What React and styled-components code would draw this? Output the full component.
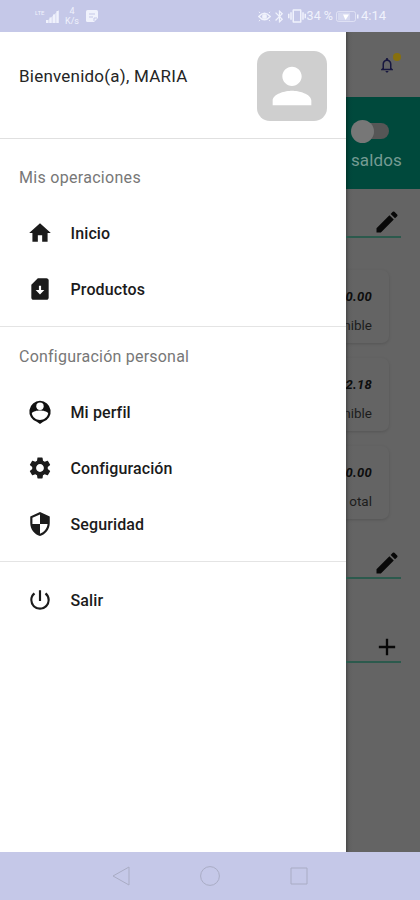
import styled, { createGlobalStyle } from "styled-components";
import {
  MdAdd,
  MdBluetooth,
  MdEdit,
  MdHome,
  MdNotificationsNone,
  MdPerson,
  MdPowerSettingsNew,
  MdSecurity,
  MdSettings,
  MdSimCardDownload,
  MdVibration,
} from "react-icons/md";

const GlobalStyle = createGlobalStyle`
  * {
    box-sizing: border-box;
  }
  body {
    margin: 0;
    font-family: Roboto, "Liberation Sans", sans-serif;
  }
  svg {
    display: block;
    flex-shrink: 0;
  }
`;

const Screen = styled.div`
  width: 420px;
  height: 900px;
  display: flex;
  flex-direction: column;
  overflow: hidden;
  background-color: #fff;
`;
const StatusBar = styled.div`
  height: 32px;
  flex-shrink: 0;
  display: flex;
  justify-content: space-between;
  align-items: center;
  padding: 0 34px 0 35px;
  background-color: #c5c8e8;
  color: #f0f2fc;
`;
const StatusGroup = styled.div`
  display: flex;
  align-items: center;
`;
const StatusIcons = styled.div`
  display: flex;
  align-items: center;
  gap: 1px;
  margin-right: 1px;
`;
const NetLabel = styled.div`
  width: 11px;
  font-size: 7px;
  line-height: 8px;
  margin-bottom: 6px;
`;
const Speed = styled.div`
  width: 16px;
  margin: 0 6px 0 5px;
  font-size: 9px;
  line-height: 10px;
  text-align: center;
`;
const StatusText = styled.div`
  margin-left: ${(props) => props.$left || 0}px;
  margin-right: ${(props) => props.$right || 0}px;
  font-size: ${(props) => props.$size}px;
  line-height: 16px;
  letter-spacing: ${(props) => props.$spacing || 0}px;
  white-space: nowrap;
`;
const Main = styled.div`
  height: 820px;
  flex-shrink: 0;
  display: flex;
`;

const Drawer = styled.div`
  width: 346px;
  flex-shrink: 0;
  background-color: #fff;
`;
const Profile = styled.div`
  height: 107px;
  display: flex;
  justify-content: space-between;
  align-items: flex-start;
  padding: 19px 19px 0 19px;
  border-bottom: 1px solid #e0e0e0;
`;
const Welcome = styled.div`
  margin-top: 13px;
  font-size: 17px;
  line-height: 24px;
  letter-spacing: 0.22px;
  color: #252525;
`;
const Avatar = styled.div`
  width: 70px;
  height: 70px;
  display: flex;
  justify-content: center;
  align-items: center;
  border-radius: 13px;
  background-color: #cfcfcf;
  color: #fff;
`;
const Menu = styled.div`
  height: ${(props) => props.$height}px;
  padding-top: ${(props) => props.$top}px;
  border-bottom: ${(props) => (props.$last ? "none" : "1px solid #e4e4e4")};
`;
const MenuTitle = styled.div`
  height: 28px;
  margin-bottom: 13px;
  padding-left: 19px;
  font-size: 16px;
  line-height: 28px;
  letter-spacing: ${(props) => props.$spacing}px;
  color: #777;
`;
const MenuItem = styled.div`
  height: 56px;
  display: flex;
  align-items: center;
  gap: 17.5px;
  padding-left: 27px;
  font-size: 16px;
  font-weight: 500;
  letter-spacing: 0.12px;
  color: #1b1b1b;
`;

const Page = styled.div`
  flex: 1;
  min-width: 0;
  overflow: hidden;
  background: linear-gradient(to right, #484848, #606060 3px, #646464 7px);
`;
const TopBar = styled.div`
  height: 65px;
  display: flex;
  justify-content: flex-end;
  padding: 24px 24px 0 0;
  color: #17173f;
`;
const Bell = styled.div`
  position: relative;
`;
const Dot = styled.div`
  position: absolute;
  top: -3px;
  right: -5px;
  width: 8px;
  height: 8px;
  border-radius: 50%;
  background-color: #87700e;
`;
const Banner = styled.div`
  height: 92px;
  display: flex;
  flex-direction: column;
  padding: 22px 0 0 5px;
  background: linear-gradient(to right, #003329, #00453a 3px, #00493c 7px);
  color: #759b93;
`;
const Toggle = styled.div`
  width: 38px;
  height: 24px;
  display: flex;
  align-items: center;
`;
const Knob = styled.div`
  width: 23px;
  height: 23px;
  flex-shrink: 0;
  z-index: 1;
  border-radius: 50%;
  background-color: #777;
`;
const Track = styled.div`
  width: 27px;
  height: 16px;
  margin-left: -12px;
  flex-shrink: 0;
  border-radius: 8px;
  background-color: #565656;
`;
const BannerText = styled.div`
  margin-top: 6px;
  font-size: 17px;
  line-height: 22px;
  letter-spacing: 0.1px;
`;
const Section = styled.div`
  width: 55px;
  height: ${(props) => props.$height}px;
  display: flex;
  justify-content: flex-end;
  align-items: flex-end;
  border-bottom: 2px solid #2c5a4d;
  color: #080808;
`;
const Cards = styled.div`
  display: flex;
  flex-direction: column;
  gap: 15px;
  padding-top: 32px;
`;
const Card = styled.div`
  width: 43px;
  height: 73px;
  display: flex;
  flex-direction: column;
  align-items: flex-end;
  padding: 16px 17px 0 0;
  overflow: hidden;
  border-radius: 0 7px 7px 0;
  box-shadow: 0 1px 3px rgba(0, 0, 0, 0.15);
`;
const Amount = styled.div`
  font-size: 13px;
  line-height: 22px;
  font-weight: 700;
  font-style: italic;
  letter-spacing: 0.3px;
  color: #0d0d0d;
`;
const Caption = styled.div`
  margin-top: 6px;
  font-size: 13.5px;
  line-height: 22px;
  color: #1c1c1c;
`;

const NavBar = styled.div`
  height: 48px;
  flex-shrink: 0;
  display: flex;
  justify-content: center;
  align-items: center;
  gap: 69px;
  background-color: #c5c8e8;
  color: #a9acc4;
`;

const SignalIcon = () => (
  <svg width="13" height="13" viewBox="0 0 13 13" fill="currentColor">
    <path d="M0 10h2v3H0zM3.5 7.5h2V13h-2zM7 4.5h2V13H7zM10.5 1h2v12h-2z" />
    <path d="M0 12 13 0v13H0z" opacity="0.6" />
  </svg>
);

const NoteIcon = () => (
  <svg width="12" height="12" viewBox="0 0 12 12">
    <path
      d="M1.5 0h9Q12 0 12 1.5V8l-4 4H1.5Q0 12 0 10.5v-9Q0 0 1.5 0z"
      fill="currentColor"
    />
    <path d="M3 4h6M3 7h4M8 11V8h3" stroke="#c5c8e8" fill="none" />
  </svg>
);

const EyeIcon = () => (
  <svg width="13" height="11" viewBox="0 0 13 11" fill="none" stroke="currentColor">
    <path d="M.8 5.5Q6.5-1 12.2 5.5 6.5 12 .8 5.5z" strokeWidth="1.5" />
    <circle cx="6.5" cy="5.5" r="2" fill="currentColor" />
    <path d="M2 2 1 .8M11 2l1-1.200M2 9l-1 1.200M11 9l1 1.200" />
  </svg>
);

const BatteryIcon = () => (
  <svg width="23" height="11" viewBox="0 0 23 11">
    <rect x=".5" y=".5" width="19" height="10" rx="2" fill="none" stroke="currentColor" opacity="0.6" />
    <path d="M2 1.5h12v8H2z" fill="currentColor" opacity="0.4" />
    <path d="M7 3.5h6L9.5 9z" fill="#fff" />
    <path d="M21 3.5h1.5v4H21z" fill="currentColor" />
  </svg>
);

const ProfileIcon = () => (
  <svg width="26" height="26" viewBox="0 0 26 26">
    <path
      d="M13 1.800a10.700 10.700 0 0 0-3.200 20.900L13 25l3.200-2.300A10.700 10.700 0 0 0 13 1.800z"
      fill="#111"
    />
    <circle cx="13" cy="7.3" r="3.7" fill="#fff" />
    <path
      d="M4.800 14.300c1.200-1.900 5.200-2.700 8.200-2.700s7 .8 8.200 2.700c-.7 4-4.300 6.700-8.200 6.700s-7.500-2.700-8.200-6.700z"
      fill="#fff"
    />
  </svg>
);

const operations = [
  { label: "Inicio", icon: <MdHome size={26} /> },
  { label: "Productos", icon: <MdSimCardDownload size={26} /> },
];

const personal = [
  { label: "Mi perfil", icon: <ProfileIcon /> },
  { label: "Configuración", icon: <MdSettings size={26} /> },
  { label: "Seguridad", icon: <MdSecurity size={26} /> },
];

const accounts = [
  { amount: "0.00", caption: "nible" },
  { amount: "2.18", caption: "nible" },
  { amount: "0.00", caption: "otal" },
];

const renderItem = (item) => (
  <MenuItem key={item.label}>
    {item.icon}
    {item.label}
  </MenuItem>
);

export default function App() {
  return (
    <>
      <GlobalStyle />
      <Screen>
        <StatusBar>
          <StatusGroup>
            <NetLabel>ʟᴛᴇ</NetLabel>
            <SignalIcon />
            <Speed>
              4
              <br />
              K/s
            </Speed>
            <NoteIcon />
          </StatusGroup>
          <StatusGroup>
            <StatusIcons>
              <EyeIcon />
              <MdBluetooth size={15} />
              <MdVibration size={18} />
            </StatusIcons>
            <StatusText $size={12.5} $right={3}>
              34 %
            </StatusText>
            <BatteryIcon />
            <StatusText $size={13} $left={2}>
              4:14
            </StatusText>
          </StatusGroup>
        </StatusBar>

        <Main>
          <Drawer>
            <Profile>
              <Welcome>Bienvenido(a), MARIA</Welcome>
              <Avatar>
                <MdPerson size={58} />
              </Avatar>
            </Profile>
            <Menu $height={188} $top={25}>
              <MenuTitle $spacing={0.3}>Mis operaciones</MenuTitle>
              {operations.map(renderItem)}
            </Menu>
            <Menu $height={235} $top={16}>
              <MenuTitle $spacing={0.22}>Configuración personal</MenuTitle>
              {personal.map(renderItem)}
            </Menu>
            <Menu $height={120} $top={10} $last>
              <MenuItem>
                <MdPowerSettingsNew size={26} />
                Salir
              </MenuItem>
            </Menu>
          </Drawer>

          <Page>
            <TopBar>
              <Bell>
                <MdNotificationsNone size={18} />
                <Dot />
              </Bell>
            </TopBar>
            <Banner>
              <Toggle>
                <Knob />
                <Track />
              </Toggle>
              <BannerText>saldos</BannerText>
            </Banner>
            <Section $height={49}>
              <MdEdit size={28} />
            </Section>
            <Cards>
              {accounts.map((account, i) => (
                <Card key={i}>
                  <Amount>{account.amount}</Amount>
                  <Caption>{account.caption}</Caption>
                </Card>
              ))}
            </Cards>
            <Section $height={60}>
              <MdEdit size={28} />
            </Section>
            <Section $height={84}>
              <MdAdd size={28} />
            </Section>
          </Page>
        </Main>

        <NavBar>
          <svg width="20" height="20" viewBox="0 0 20 20" fill="none" stroke="currentColor">
            <path d="M18 1v18L2 10z" />
          </svg>
          <svg width="20" height="20" viewBox="0 0 20 20" fill="none" stroke="currentColor">
            <circle cx="10" cy="10" r="9.4" />
          </svg>
          <svg width="20" height="20" viewBox="0 0 20 20" fill="none" stroke="currentColor">
            <path d="M2 2h16v16H2z" />
          </svg>
        </NavBar>
      </Screen>
    </>
  );
}
